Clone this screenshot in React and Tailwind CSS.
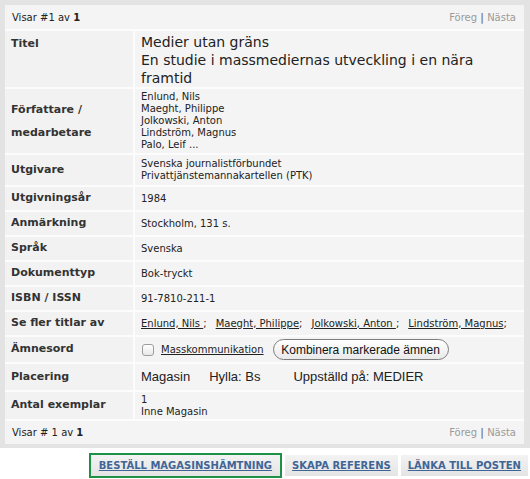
import React from 'react';

function Label({ children, className = '' }) {
  return (
    <div className={`flex items-center bg-[#f2f2f2] pl-[6px] text-[11px] font-bold text-[#333] ${className}`}>
      {children}
    </div>
  );
}

function Value({ children, className = '' }) {
  return (
    <div className={`flex flex-col justify-center bg-[#f4f4f4] pl-[6px] text-[10px] leading-[12px] text-[#222] ${className}`}>
      {children}
    </div>
  );
}

function NavRow({ children, className = '' }) {
  return (
    <div className={`col-span-2 flex items-center justify-between bg-[#f4f4f4] pl-[7px] pr-[8px] text-[10px] text-[#222] ${className}`}>
      <span>{children}</span>
      <span className="text-[#9a9a9a]">
        Föreg <span className="font-bold text-[#777]">|</span> Nästa
      </span>
    </div>
  );
}

function ActionButton({ children, className = '' }) {
  return (
    <a
      href="#"
      className={`flex h-[21px] items-center bg-gradient-to-b from-[#f3f3f3] to-[#e4e4e4] px-[7px] text-[10px] font-bold text-[#3f6596] underline ${className}`}
    >
      {children}
    </a>
  );
}

const authors = ['Enlund, Nils ', 'Maeght, Philippe', 'Jolkowski, Anton ', 'Lindström, Magnus'];

export default function App() {
  return (
    <div className="h-[479px] w-[530px] bg-white font-['DejaVu_Sans',Verdana,sans-serif]">
      <div className="bg-[#e3e3e3] pb-[4px] pl-[5px] pr-[6px] pt-[5px]">
        <div className="grid grid-cols-[128px_1fr] gap-[2px] bg-[#fcfcfc]">
          <NavRow className="h-[24px]">
            Visar #1 av <b>1</b>
          </NavRow>

          <Label className="h-[56px] items-start pt-[5px]">Titel</Label>
          <Value className="justify-start pt-[2px] text-[14px] leading-[18px]">
            <span>Medier utan gräns</span>
            <span>En studie i massmediernas utveckling i en nära framtid</span>
          </Value>

          <Label className="h-[64px] leading-[23px]">
            Författare /<br />
            medarbetare
          </Label>
          <Value>
            <span>Enlund, Nils</span>
            <span>Maeght, Philippe</span>
            <span>Jolkowski, Anton</span>
            <span>Lindström, Magnus</span>
            <span>Palo, Leif ...</span>
          </Value>

          <Label className="h-[30px]">Utgivare</Label>
          <Value>
            <span>Svenska journalistförbundet</span>
            <span>Privattjänstemannakartellen (PTK)</span>
          </Value>

          <Label className="h-[23px]">Utgivningsår</Label>
          <Value>1984</Value>

          <Label className="h-[23px]">Anmärkning</Label>
          <Value>Stockholm, 131 s.</Value>

          <Label className="h-[23px]">Språk</Label>
          <Value>Svenska</Value>

          <Label className="h-[23px]">Dokumenttyp</Label>
          <Value>Bok-tryckt</Value>

          <Label className="h-[23px]">ISBN / ISSN</Label>
          <Value>91-7810-211-1</Value>

          <Label className="h-[23px]">Se fler titlar av</Label>
          <Value>
            <div className="flex">
              {authors.map((a, i) => (
                <span key={a} className={i ? 'ml-[9px]' : ''}>
                  <a href="#" className="whitespace-pre underline">
                    {a}
                  </a>
                  ;
                </span>
              ))}
            </div>
          </Value>

          <Label className="h-[25px]">Ämnesord</Label>
          <Value>
            <div className="flex items-center">
              <span className="ml-[1px] h-[12px] w-[12px] rounded-[3px] border border-[#9d9d9d] bg-gradient-to-b from-white to-[#e8e8e8]" />
              <a href="#" className="ml-[7px] underline">
                Masskommunikation
              </a>
              <button className="ml-[9px] flex h-[21px] w-[176px] items-center justify-center rounded-full border border-[#7d7d7d] bg-gradient-to-b from-white to-[#e9e9e9] font-['Liberation_Sans',Arial,sans-serif] text-[12px] text-[#111]">
                Kombinera markerade ämnen
              </button>
            </div>
          </Value>

          <Label className="h-[26px]">Placering</Label>
          <Value className="font-['Liberation_Sans',Arial,sans-serif] text-[13px] leading-[16px]">
            <div className="flex">
              <span>Magasin</span>
              <span className="ml-[19px]">Hylla: Bs</span>
              <span className="ml-[33px]">Uppställd på: MEDIER</span>
            </div>
          </Value>

          <Label className="h-[27px]">Antal exemplar</Label>
          <Value>
            <span>1</span>
            <span>Inne Magasin</span>
          </Value>

          <NavRow className="h-[23px]">
            Visar # 1 av <b>1</b>
          </NavRow>
        </div>
      </div>

      <div className="flex items-center justify-end gap-[3px] pr-[2px] pt-[5px]">
        <div className="border-2 border-[#1f9146]">
          <ActionButton className="px-[8px]">BESTÄLL MAGASINSHÄMTNING</ActionButton>
        </div>
        <ActionButton>SKAPA REFERENS</ActionButton>
        <ActionButton>LÄNKA TILL POSTEN</ActionButton>
      </div>
    </div>
  );
}
